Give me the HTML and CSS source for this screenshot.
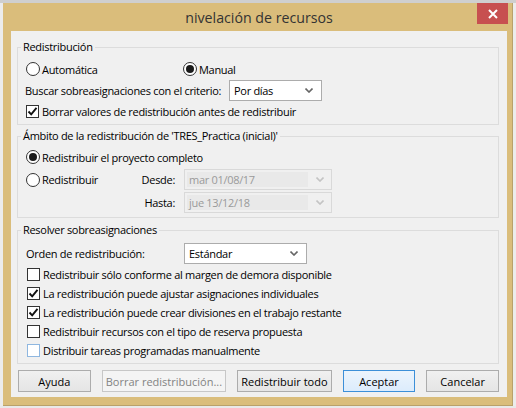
FILE: index.html
```html
<!DOCTYPE html>
<html lang="es">
<head>
<meta charset="utf-8">
<title>nivelación de recursos</title>
<link rel="stylesheet" href="styles.css">
</head>
<body>
<div class="desk">
  <div class="window">
    <div class="titlebar">
      <span></span>
      <span class="title">nivelación de recursos</span>
      <span class="close"><svg width="10" height="10" viewBox="0 0 10 10"><path d="M1 1L9 9M9 1L1 9" stroke="#fff" stroke-width="2"/></svg></span>
    </div>
    <div class="client">
      <fieldset class="group g1">
        <legend>Redistribución</legend>
        <div class="row r20">
          <label class="opt w-auto"><span class="radio"></span>Automática</label>
          <label class="opt"><span class="radio on"></span>Manual</label>
        </div>
        <div class="row r21 mt1 pl7">
          <span class="lbl w-buscar">Buscar sobreasignaciones con el criterio:</span>
          <span class="select w-dias"><span class="val">Por días</span><svg class="chev" width="8" height="5" viewBox="0 0 8 5"><path d="M0.5 0.5L4 4L7.5 0.5" fill="none" stroke="#666" stroke-width="1.6"/></svg></span>
        </div>
        <div class="row r20">
          <label class="opt"><span class="check on"><svg width="11" height="11" viewBox="0 0 11 11"><path d="M1.5 5.5L4.2 8.3L9.5 1.8" fill="none" stroke="#111" stroke-width="1.9"/></svg></span>Borrar valores de redistribución antes de redistribuir</label>
        </div>
      </fieldset>

      <fieldset class="group g2">
        <legend>Ámbito de la redistribución de 'TRES_Practica (inicial)'</legend>
        <div class="row r20">
          <label class="opt"><span class="radio on"></span>Redistribuir el proyecto completo</label>
        </div>
        <div class="row r21 mt2">
          <label class="opt w-redis"><span class="radio"></span>Redistribuir</label>
          <span class="dlbl">Desde:</span>
          <span class="date"><span class="dval">mar 01/08/17</span><svg class="chev" width="8" height="5" viewBox="0 0 8 5"><path d="M0.5 0.5L4 4L7.5 0.5" fill="none" stroke="#c4c4c4" stroke-width="1.6"/></svg></span>
        </div>
        <div class="row r21 mt2">
          <span class="w-redis"></span>
          <span class="dlbl">Hasta:</span>
          <span class="date"><span class="dval">jue 13/12/18</span><svg class="chev" width="8" height="5" viewBox="0 0 8 5"><path d="M0.5 0.5L4 4L7.5 0.5" fill="none" stroke="#c4c4c4" stroke-width="1.6"/></svg></span>
        </div>
      </fieldset>

      <fieldset class="group g3">
        <legend>Resolver sobreasignaciones</legend>
        <div class="row r21">
          <span class="lbl w-orden">Orden de redistribución:</span>
          <span class="select w-std"><span class="val">Estándar</span><svg class="chev" width="8" height="5" viewBox="0 0 8 5"><path d="M0.5 0.5L4 4L7.5 0.5" fill="none" stroke="#666" stroke-width="1.6"/></svg></span>
        </div>
        <div class="checks">
          <label class="opt r19"><span class="check"></span>Redistribuir sólo conforme al margen de demora disponible</label>
          <label class="opt r19"><span class="check on"><svg width="11" height="11" viewBox="0 0 11 11"><path d="M1.5 5.5L4.2 8.3L9.5 1.8" fill="none" stroke="#111" stroke-width="1.9"/></svg></span>La redistribución puede ajustar asignaciones individuales</label>
          <label class="opt r19"><span class="check on"><svg width="11" height="11" viewBox="0 0 11 11"><path d="M1.5 5.5L4.2 8.3L9.5 1.8" fill="none" stroke="#111" stroke-width="1.9"/></svg></span>La redistribución puede crear divisiones en el trabajo restante</label>
          <label class="opt r19"><span class="check"></span>Redistribuir recursos con el tipo de reserva propuesta</label>
          <label class="opt r19"><span class="check focus"></span>Distribuir tareas programadas manualmente</label>
        </div>
      </fieldset>

      <div class="buttons">
        <button class="btn w73">Ayuda</button>
        <button class="btn w125" disabled>Borrar redistribución...</button>
        <button class="btn w95">Redistribuir todo</button>
        <button class="btn w73 default">Aceptar</button>
        <button class="btn w73">Cancelar</button>
      </div>
    </div>
  </div>
</div>
</body>
</html>
```

FILE: styles.css
```css
html, body {
  margin: 0;
  padding: 0;
}
body {
  width: 516px;
  height: 408px;
  overflow: hidden;
  background: #e9e9e9;
  font-family: "Open Sans", "Noto Sans", sans-serif;
  font-size: 11px;
  letter-spacing: -0.3px;
  color: #000;
}
.desk {
  padding: 3px 3px 0 3px;
  background: linear-gradient(#cfcfcf, #cfcfcf) top / 100% 3px no-repeat, #ececec;
}
.window {
  width: 510px;
  height: 403px;
  box-sizing: border-box;
  background: #dabd7b;
  padding: 0 5px 9px 8px;
  border-right: 1px solid #b9a16a;
  border-bottom: 1px solid #b9a16a;
}
.titlebar {
  height: 28px;
  display: grid;
  grid-template-columns: 1fr auto 1fr;
}
.title {
  font-size: 14.2px;
  letter-spacing: 0;
  color: #333;
  padding-top: 6px;
  line-height: 18px;
}
.close {
  justify-self: end;
  width: 31px;
  height: 21px;
  margin-right: -1px;
  background: #c75050;
  display: flex;
  align-items: center;
  justify-content: center;
}
.client {
  height: 366px;
  box-sizing: border-box;
  background: #f0f0f0;
  padding: 8px 8px 4px 6px;
}
.group {
  margin: 0;
  padding: 0 0 3px 0;
  border: 1px solid #dcdcdc;
  min-width: 0;
}
.group legend {
  margin-left: 3px;
  padding: 0 2px;
  line-height: 16px;
  height: 16px;
}
.g1 { padding-top: 4px; }
.g2 { margin-top: 3px; padding-top: 3px; padding-bottom: 4px; }
.g3 { margin-top: 4px; padding-top: 5px; padding-bottom: 3px; }
.row {
  display: flex;
  align-items: center;
  padding-left: 8px;
}
.pl7 { padding-left: 7px; }
.r20 { height: 20px; }
.r21 { height: 21px; }
.mt1 { margin-top: 1px; }
.mt2 { margin-top: 2px; }
.opt {
  display: flex;
  align-items: center;
  white-space: nowrap;
}
.w-auto { width: 157px; }
.w-buscar { width: 204px; }
.w-redis { width: 100px; flex: none; }
.w-orden { width: 158px; }
.lbl { white-space: nowrap; }
.radio {
  width: 14px;
  height: 14px;
  box-sizing: border-box;
  border: 1px solid #333;
  border-radius: 50%;
  background: #fff;
  margin-right: 2px;
  display: inline-flex;
  align-items: center;
  justify-content: center;
  flex: none;
}
.radio.on::after {
  content: "";
  width: 8px;
  height: 8px;
  border-radius: 50%;
  background: #1a1a1a;
}
.check {
  width: 13px;
  height: 13px;
  box-sizing: border-box;
  border: 1px solid #333;
  background: #fff;
  margin-right: 3px;
  display: inline-flex;
  align-items: center;
  justify-content: center;
  flex: none;
}
.check.focus { border-color: #8fb7e0; }
.select {
  height: 21px;
  box-sizing: border-box;
  border: 1px solid #acacac;
  background: #fff;
  display: flex;
  align-items: center;
  justify-content: space-between;
  padding: 0 8px 0 4px;
}
.w-dias { width: 93px; }
.w-std { width: 123px; }
.dlbl {
  width: 49px;
  text-align: right;
  margin-right: 9px;
  flex: none;
}
.date {
  width: 148px;
  height: 21px;
  box-sizing: border-box;
  border: 1px solid #d9d9d9;
  background: #f0f0f0;
  display: flex;
  align-items: center;
  padding: 2px 7px 2px 2px;
  gap: 8px;
}
.dval {
  flex: 1;
  height: 15px;
  line-height: 15px;
  background: #e9e9e9;
  color: #9a9a9a;
  padding-left: 2px;
}
.checks {
  margin-top: 1px;
  padding-left: 9px;
  display: flex;
  flex-direction: column;
}
.r19 { height: 19px; }
.buttons {
  margin-top: 6px;
  padding-left: 1px;
  display: flex;
  gap: 11px;
}
.btn {
  height: 22px;
  box-sizing: border-box;
  border: 1px solid #acacac;
  background: linear-gradient(#f0f0f0, #e5e5e5);
  font: inherit;
  color: #000;
  padding: 0;
  margin: 0;
}
.btn:disabled {
  border-color: #c7c7c7;
  background: #f4f4f4;
  color: #838383;
}
.btn.default {
  border-color: #3c8fd8;
  background: linear-gradient(#ecf4fc, #dcecfc);
}
.w73 { width: 73px; }
.w95 { width: 95px; }
.w125 { width: 125px; }
```
